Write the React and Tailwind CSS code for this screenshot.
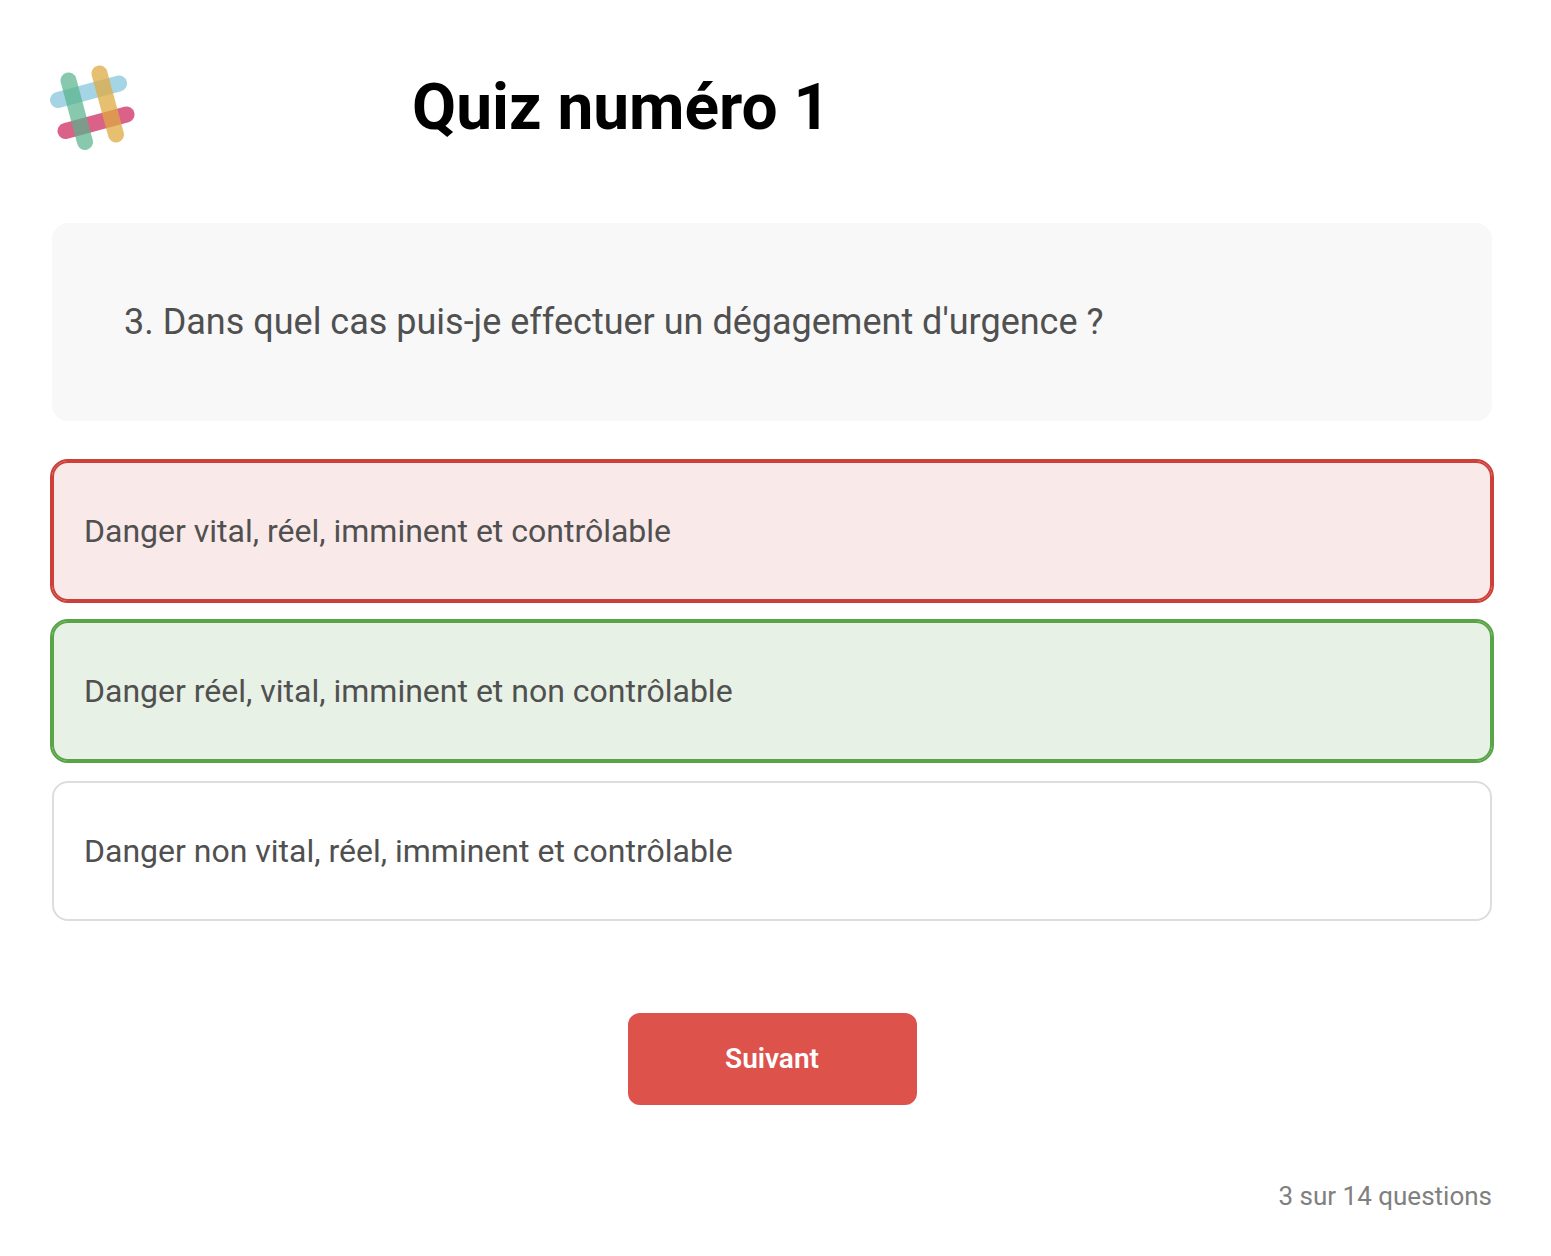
const answers = [
  { id: "a", text: "Danger vital, réel, imminent et contrôlable", state: "wrong" },
  { id: "b", text: "Danger réel, vital, imminent et non contrôlable", state: "right" },
  { id: "c", text: "Danger non vital, réel, imminent et contrôlable", state: "idle" },
];

const stateClasses = {
  wrong: "border-[#cd4039] bg-[#f9e9e8] outline-2 outline-[#cd4039]",
  right: "border-[#58a447] bg-[#e8f1e5] outline-2 outline-[#58a447]",
  idle: "border-[#dddddd] bg-white",
};

function Logo() {
  return (
    <svg viewBox="0 0 86 86" className="size-[86px] shrink-0" fill="none" strokeWidth="16" strokeLinecap="round" aria-label="Logo" role="img">
      <path d="M8 35 69 18.500" stroke="#8fcbdd" strokeOpacity=".8" />
      <path d="M15.500 66 76.500 49.500" stroke="#d13b6c" strokeOpacity=".8" />
      <path d="M18.500 15.500 35 77" stroke="#56b28a" strokeOpacity=".7" />
      <path d="M49.500 8.500 66 69.500" stroke="#dfa941" strokeOpacity=".75" />
    </svg>
  );
}

export default function App() {
  return (
    <main className="min-h-screen bg-white pl-[52px] pr-[59px] pt-[65px] pb-10 font-['Roboto',sans-serif] text-[#505050]">
      <header className="-ml-[2px] flex items-center gap-[276px]">
        <Logo />
        <h1 className="text-[64px] leading-[86px] font-bold text-black">Quiz numéro 1</h1>
      </header>
      <section className="mt-[72px] rounded-2xl bg-[#f8f8f8] px-[72px] py-[72px]">
        <h2 className="text-4xl leading-[54px]">3. Dans quel cas puis-je effectuer un dégagement d'urgence ?</h2>
      </section>
      <div className="mt-10 flex flex-col gap-5">
        {answers.map((a) => (
          <button key={a.id} type="button" className={`rounded-2xl border-2 px-[30px] py-11 text-left text-[32px] leading-[48px] ${stateClasses[a.state]}`}>
            {a.text}
          </button>
        ))}
      </div>
      <div className="mt-23 flex justify-center">
        <button type="button" className="w-[289px] rounded-xl bg-[#de524c] py-6 text-[28px] leading-[44px] font-semibold text-white">Suivant</button>
      </div>
      <p className="mt-[72px] text-right text-[26px] leading-[39px] text-[#808080]">3 sur 14 questions</p>
    </main>
  );
}
